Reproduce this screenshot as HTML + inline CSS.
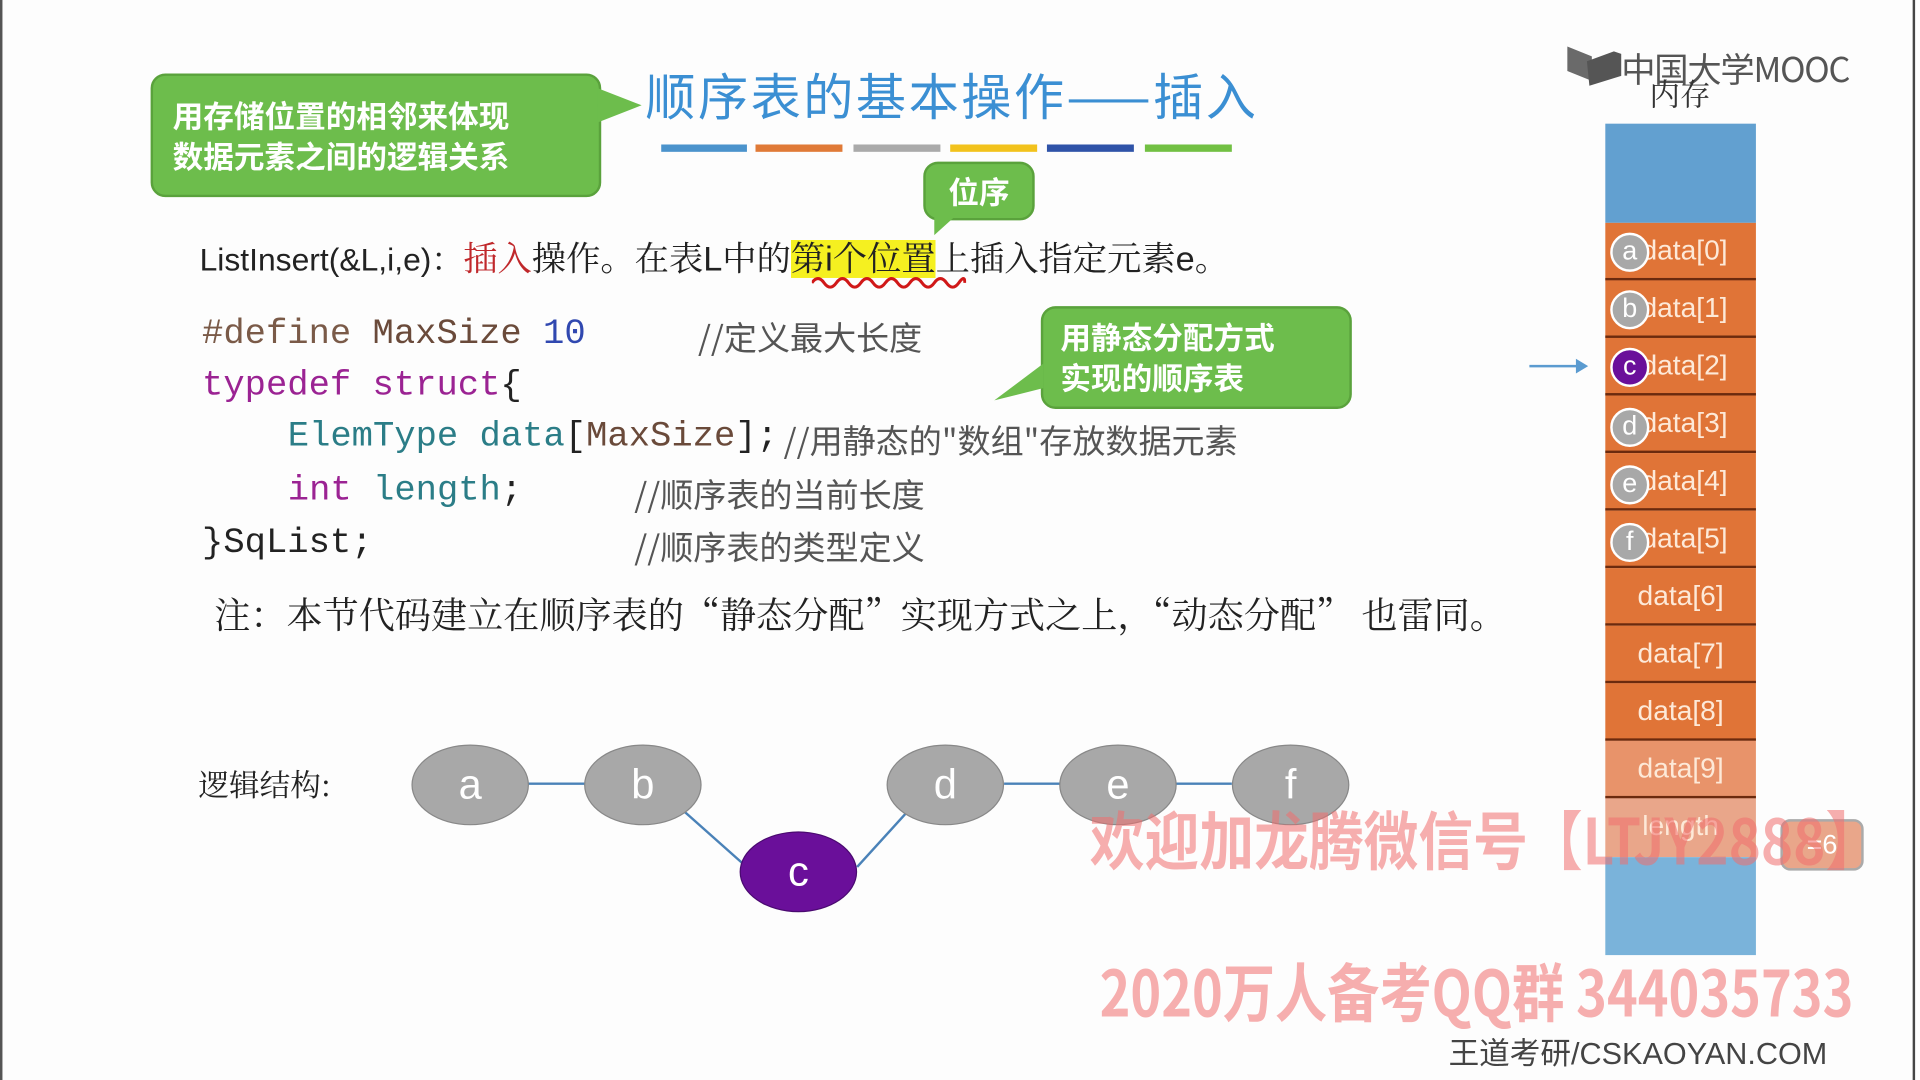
<!DOCTYPE html>
<html><head><meta charset="utf-8"><style>
html,body{margin:0;padding:0;background:#fff;overflow:hidden}
#s{position:absolute;left:0;top:0;width:1568px;height:882px;transform:scale(1.22449,1.22449);transform-origin:0 0;background:#fdfdfd;font-family:"Liberation Sans","Noto Sans CJK SC",sans-serif}
.a{position:absolute;white-space:nowrap}
.call{position:absolute;background:#6dbd4c;border:2px solid #5aa23c;border-radius:12px;color:#fff;font-weight:bold;font-family:"Noto Sans CJK SC",sans-serif}
.code{font-family:"Liberation Mono","Noto Sans CJK SC",monospace;font-size:29px;color:#222}
.cm{color:#555;font-family:"Noto Sans CJK SC",sans-serif;font-size:27px}
.cell{position:absolute;left:1311px;width:123px;height:45px;background:#e07437;border-bottom:2px solid #6b2a0e;color:#fde9d8;font-size:23px;line-height:45px;text-align:center;font-family:"Liberation Sans",sans-serif}
.dot{position:absolute;left:1315px;width:28px;height:28px;border-radius:50%;background:#a8a8a8;border:2px solid #fff;color:#fff;font-size:22px;line-height:26px;text-align:center}
.el{position:absolute;width:94px;height:64px;border-radius:50%;background:#a8a8a8;border:1px solid #888;color:#fff;font-size:34px;line-height:64px;text-align:center}
.wm{position:absolute;color:rgba(240,110,110,.55);font-weight:bold;font-family:"Noto Sans CJK SC",sans-serif;white-space:nowrap;transform-origin:0 0}
</style></head><body><div id="s">
<div style="position:absolute;left:0;top:0;width:2px;height:882px;background:#555"></div>
<div style="position:absolute;left:1562px;top:0;width:2px;height:882px;background:#444"></div>

<div class="call" style="left:123px;top:60px;width:364px;height:97px;font-size:25px;line-height:33px;padding:0;">
<div style="padding:16px 0 0 16px">用存储位置的相邻来体现<br>数据元素之间的逻辑关系</div></div>
<svg class="a" style="left:480px;top:70px" width="50" height="40"><polygon points="8,2 44,16 8,30" fill="#6dbd4c"/></svg>

<div class="a" style="left:527px;top:46px;font-size:41px;letter-spacing:2px;color:#3b8fd3;font-family:'Noto Sans CJK SC',sans-serif">顺序表的基本操作——插入</div>
<div class="a" style="left:540px;top:118px;width:70px;height:6px;background:#4b93cc"></div>
<div class="a" style="left:617px;top:118px;width:71px;height:6px;background:#e07a37"></div>
<div class="a" style="left:697px;top:118px;width:71px;height:6px;background:#aaaaaa"></div>
<div class="a" style="left:776px;top:118px;width:71px;height:6px;background:#f2c21c"></div>
<div class="a" style="left:855px;top:118px;width:71px;height:6px;background:#2f53a8"></div>
<div class="a" style="left:935px;top:118px;width:71px;height:6px;background:#72c043"></div>

<div class="call" style="left:754px;top:132px;width:87px;height:44px;font-size:25px;line-height:44px;text-align:center">位序</div>
<svg class="a" style="left:755px;top:170px" width="40" height="25"><polygon points="8,4 28,4 8,22" fill="#6dbd4c"/></svg>

<div class="a" style="left:163px;top:190px;font-size:28px;color:#222;font-family:'Liberation Sans','Noto Serif CJK SC',serif"><span style="font-size:26px">ListInsert(&amp;L,i,e)：</span><span style="color:#c0282b">插入</span>操作。在表L中的<span style="background:#f5f020">第i个位置</span>上插入指定元素e。</div>
<svg class="a" style="left:663px;top:224px" width="126" height="14"><path d="M0,7 q5,-7 10,0 t10,0 t10,0 t10,0 t10,0 t10,0 t10,0 t10,0 t10,0 t10,0 t10,0 t10,0 t5,0" stroke="#d01818" stroke-width="2.5" fill="none"/></svg>

<div class="a code" style="left:165px;top:256px"><span style="color:#7a5a48">#define</span> <span style="color:#6a4a3a">MaxSize</span> <span style="color:#3048b0">10</span></div>
<div class="a cm" style="left:570px;top:255px">//定义最大长度</div>
<div class="a code" style="left:165px;top:298px"><span style="color:#9b2393">typedef struct</span>{</div>
<div class="a code" style="left:235px;top:340px"><span style="color:#2b7d87">ElemType data</span>[<span style="color:#6a4a3a">MaxSize</span>];</div>
<div class="a cm" style="left:640px;top:339px">//用静态的"数组"存放数据元素</div>
<div class="a code" style="left:235px;top:384px"><span style="color:#9b2393">int</span> <span style="color:#2b7d87">length</span>;</div>
<div class="a cm" style="left:518px;top:383px">//顺序表的当前长度</div>
<div class="a code" style="left:165px;top:427px">}SqList;</div>
<div class="a cm" style="left:518px;top:426px">//顺序表的类型定义</div>

<div class="call" style="left:850px;top:250px;width:250px;height:80px;font-size:25px;line-height:33px"><div style="padding:7px 0 0 14px">用静态分配方式<br>实现的顺序表</div></div>
<svg class="a" style="left:808px;top:295px" width="50" height="35"><polygon points="44,2 44,22 4,32" fill="#6dbd4c"/></svg>

<div class="a" style="left:175px;top:480px;font-size:29.5px;color:#222;font-family:'Noto Serif CJK SC',serif">注：本节代码建立在顺序表的“静态分配”实现方式之上，“动态分配” 也雷同。</div>

<div class="a" style="left:162px;top:622px;font-size:25px;color:#222;font-family:'Noto Serif CJK SC',serif">逻辑结构:</div>
<svg class="a" style="left:0;top:0" width="1568" height="882"><g stroke="#4a82b8" stroke-width="2"><line x1="430" y1="640" x2="478" y2="640"/><line x1="558" y1="662" x2="612" y2="710"/><line x1="700" y1="708" x2="740" y2="664"/><line x1="820" y1="640" x2="866" y2="640"/><line x1="960" y1="640" x2="1006" y2="640"/></g>
<path d="M1249,298 h38 v-5 l10,6 l-10,6 v-5 h-38z" fill="#5b9bd0"/></svg>
<div class="el" style="left:336px;top:608px">a</div>
<div class="el" style="left:477px;top:608px">b</div>
<div class="el" style="left:724px;top:608px">d</div>
<div class="el" style="left:865px;top:608px">e</div>
<div class="el" style="left:1006px;top:608px">f</div>
<div class="el" style="left:604px;top:679px;background:#6a0f9a;border-color:#4a0a70">c</div>

<svg class="a" style="left:1278px;top:36px" width="50" height="36"><path d="M2,2 L22,10 L22,30 L2,22Z" fill="#6a6a6a"/><path d="M18,14 L40,6 L46,8 L46,26 L20,34Z" fill="#555"/></svg>
<div class="a" style="left:1324px;top:36px;font-size:28px;color:#555;letter-spacing:-1px;font-family:'Noto Sans CJK SC',sans-serif">中国大学MOOC</div>
<div class="a" style="left:1347px;top:58px;font-size:25px;color:#333;font-family:'Noto Serif CJK SC',serif">内存</div>

<div class="a" style="left:1311px;top:101px;width:123px;height:81px;background:#62a0d0"></div>
<div class="cell" style="top:182px">&nbsp;data[0]</div>
<div class="cell" style="top:229px">&nbsp;data[1]</div>
<div class="cell" style="top:276px">&nbsp;data[2]</div>
<div class="cell" style="top:323px">&nbsp;data[3]</div>
<div class="cell" style="top:370px">&nbsp;data[4]</div>
<div class="cell" style="top:417px">&nbsp;data[5]</div>
<div class="cell" style="top:464px">data[6]</div>
<div class="cell" style="top:511px">data[7]</div>
<div class="cell" style="top:558px">data[8]</div>
<div class="cell" style="top:605px;background:#e8936a">data[9]</div>
<div class="cell" style="top:652px;background:#e9a68a;border:none;height:48px">length</div>
<div class="a" style="left:1311px;top:700px;width:123px;height:80px;background:#7ab3da"></div>
<div class="a" style="left:1454px;top:669px;width:64px;height:38px;background:#e9a68a;border:2px solid #aaa;border-radius:8px;color:#fff;font-size:22px;line-height:38px;text-align:center">=6</div>
<div class="dot" style="top:190px">a</div>
<div class="dot" style="top:237px">b</div>
<div class="dot" style="top:284px;background:#6a0f9a">c</div>
<div class="dot" style="top:333px">d</div>
<div class="dot" style="top:380px">e</div>
<div class="dot" style="top:427px">f</div>

<div class="wm" style="left:890px;top:646px;font-size:52px;transform:scaleX(0.86)">欢迎加龙腾微信号【LTJY2888】</div>
<div class="wm" style="left:898px;top:770px;font-size:52px;transform:scaleX(0.82)">2020万人备考QQ群 344035733</div>
<div class="a" style="left:1183px;top:841px;font-size:25px;color:#444;font-family:'Liberation Sans','Noto Sans CJK SC',sans-serif">王道考研/CSKAOYAN.COM</div>
</div></body></html>
